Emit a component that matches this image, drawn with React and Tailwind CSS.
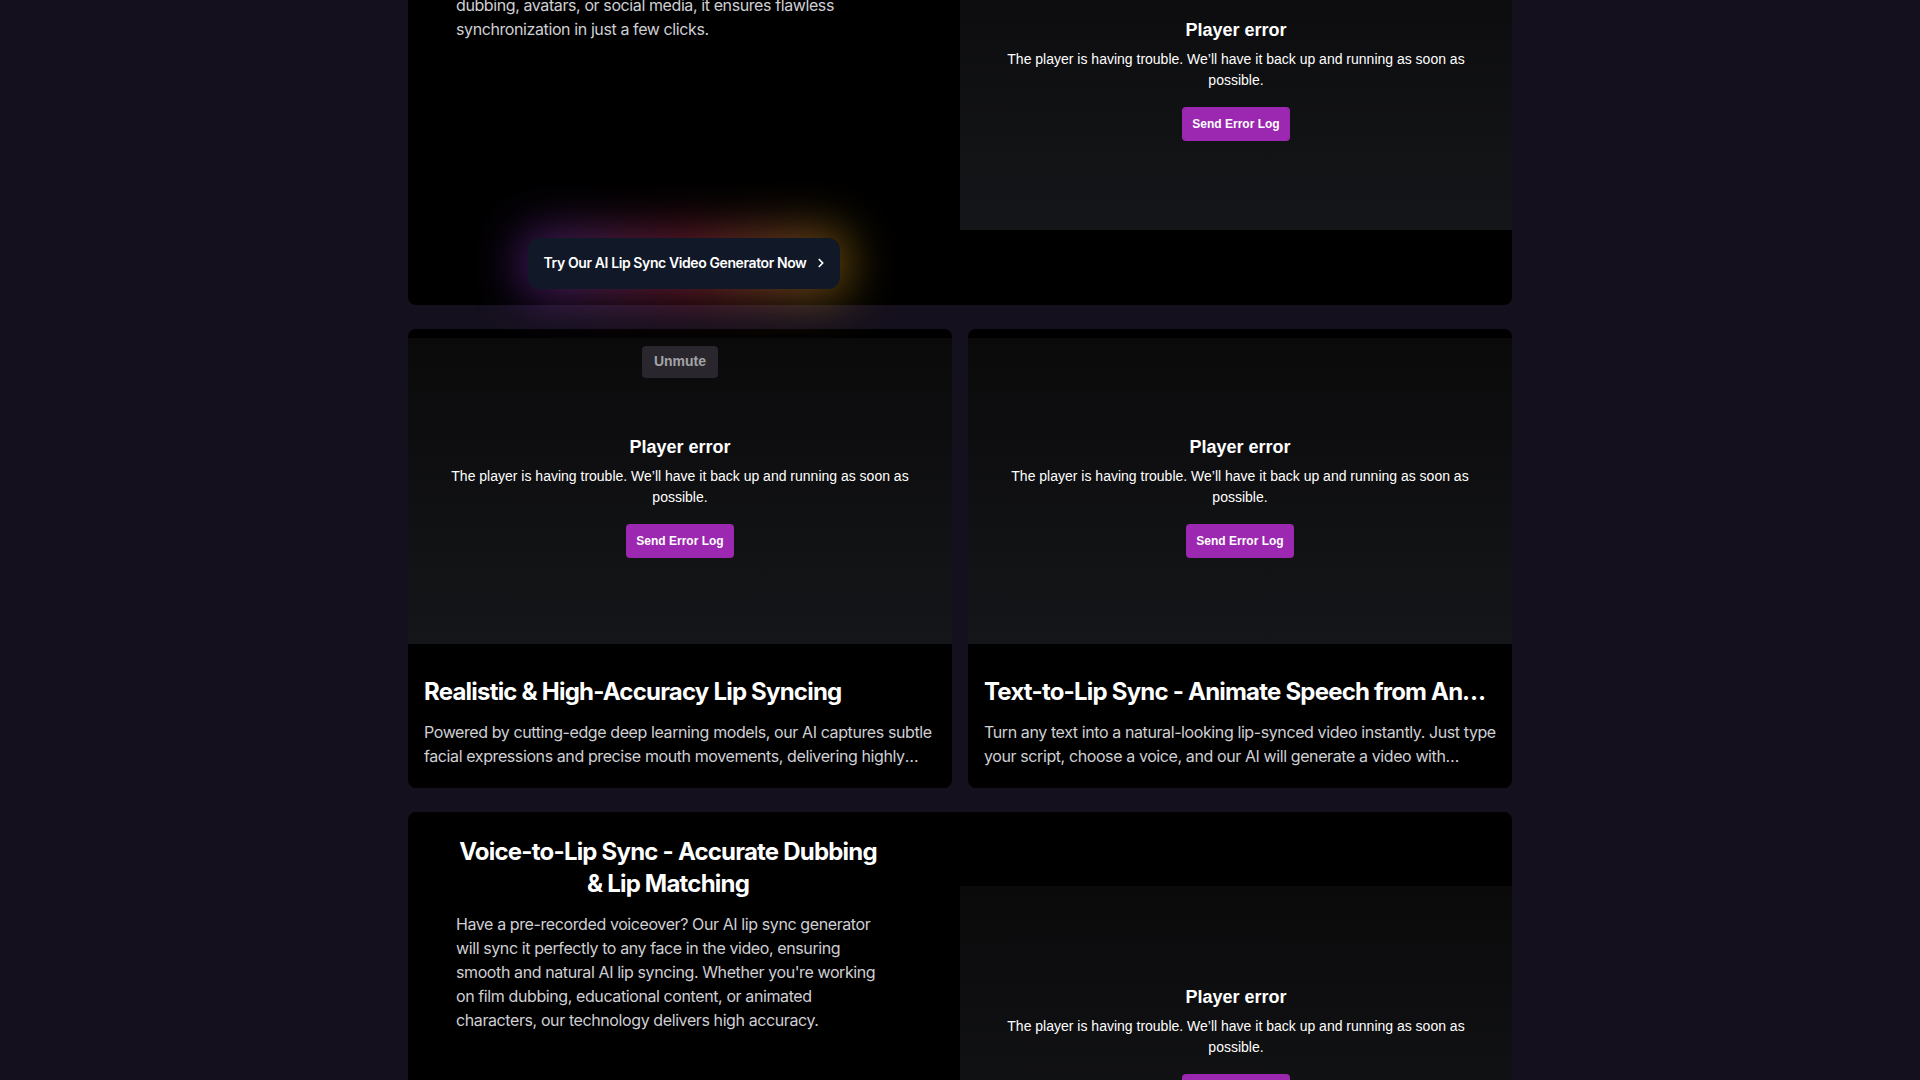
import React from "react";
import { ChevronRight } from "lucide-react";

function Player({ unmute = false, className = "" }) {
  return (
    <div
      className={
        "relative flex w-full flex-col items-center justify-center bg-gradient-to-b from-[#0a0a0b] to-[#151619] pt-3 tracking-normal " +
        className
      }
      style={{ fontFamily: '"Liberation Sans", Arial, sans-serif' }}
    >
      {unmute && (
        <div className="absolute left-1/2 top-2 flex h-8 w-[76px] -translate-x-1/2 items-center justify-center rounded bg-[#29272d] text-[14px] font-bold text-[#a3a3a6]">
          Unmute
        </div>
      )}
      <div className="text-[18px] font-bold leading-[22px] text-white">Player error</div>
      <p className="mt-2 max-w-[480px] text-center text-[14px] leading-[21px] text-white">
        The player is having trouble. We’ll have it back up and running as soon as possible.
      </p>
      <button className="mt-4 flex h-[34px] items-center rounded bg-[#9c27b0] px-[10px] text-[12px] font-bold text-white">
        Send Error Log
      </button>
    </div>
  );
}

function FeatureCard({ title, text }) {
  return (
    <div className="flex flex-col overflow-hidden rounded-lg bg-black pt-[9px]">
      <Player unmute={title.startsWith("Realistic")} className="h-[306px]" />
      <div className="px-4 pb-5 pt-8">
        <h3 className="truncate text-2xl font-bold leading-8 tracking-[-0.033em] text-white">{title}</h3>
        <p className="mt-3 line-clamp-2 text-base leading-6 text-[#cfcfd4]">{text}</p>
      </div>
    </div>
  );
}

export default function App() {
  return (
    <div
      className="h-screen overflow-hidden bg-[#15101d] tracking-tight"
      style={{ fontFamily: 'Inter, "Noto Sans", sans-serif' }}
    >
      <div className="mx-auto -mt-[155px] flex w-[1104px] flex-col gap-6">
        {/* Card 1 */}
        <div className="grid grid-cols-2 rounded-lg bg-black">
          <div className="flex flex-col justify-between px-12 pb-4 pt-6">
            <div className="w-[424px]">
              <h2 className="text-center text-2xl font-bold leading-8 tracking-[-0.033em] text-white">
                AI Lip Sync Video Generator -<br />Perfect Lip Sync Online
              </h2>
              <p className="mt-3 text-base leading-6 text-[#cfcfd4]">
                Upload any video and audio, and our AI instantly
                <br />
                matches lip movements to speech. Perfect for video
                <br />
                dubbing, avatars, or social media, it ensures flawless synchronization in just a few clicks.
              </p>
            </div>
            <div className="relative self-center">
              <div className="absolute -inset-2 rounded-2xl bg-gradient-to-r from-[#7c2bd0] via-[#d02b55] to-[#e0a800] opacity-50 blur-xl"></div>
              <button className="relative flex h-[51px] items-center gap-2 rounded-xl bg-[#111827] pl-4 pr-3 text-sm font-semibold text-white">
                Try Our AI Lip Sync Video Generator Now
                <ChevronRight size={14} strokeWidth={3} />
              </button>
            </div>
          </div>
          <div className="flex items-center pb-[75px] pt-[74px]">
            <Player className="aspect-video" />
          </div>
        </div>

        {/* Row of two */}
        <div className="grid grid-cols-2 gap-4">
          <FeatureCard
            title="Realistic & High-Accuracy Lip Syncing"
            text="Powered by cutting-edge deep learning models, our AI captures subtle facial expressions and precise mouth movements, delivering highly realistic lip sync results that look natural in every frame."
          />
          <FeatureCard
            title="Text-to-Lip Sync - Animate Speech from Any Text"
            text="Turn any text into a natural-looking lip-synced video instantly. Just type your script, choose a voice, and our AI will generate a video with perfectly matched lip movements."
          />
        </div>

        {/* Card 3 */}
        <div className="grid grid-cols-2 rounded-lg bg-black">
          <div className="flex flex-col px-12 pb-4 pt-6">
            <div className="w-[424px]">
              <h2 className="text-center text-2xl font-bold leading-8 tracking-[-0.033em] text-white">
                Voice-to-Lip Sync - Accurate Dubbing &amp; Lip Matching
              </h2>
              <p className="mt-3 text-base leading-6 text-[#cfcfd4]">
                Have a pre-recorded voiceover? Our AI lip sync generator will sync it perfectly to any face in the
                video, ensuring smooth and natural AI lip syncing. Whether you're working on film dubbing, educational
                content, or animated characters, our technology delivers high accuracy.
              </p>
            </div>
          </div>
          <div className="flex items-center py-[74px]">
            <Player className="aspect-video" />
          </div>
        </div>
      </div>
    </div>
  );
}
